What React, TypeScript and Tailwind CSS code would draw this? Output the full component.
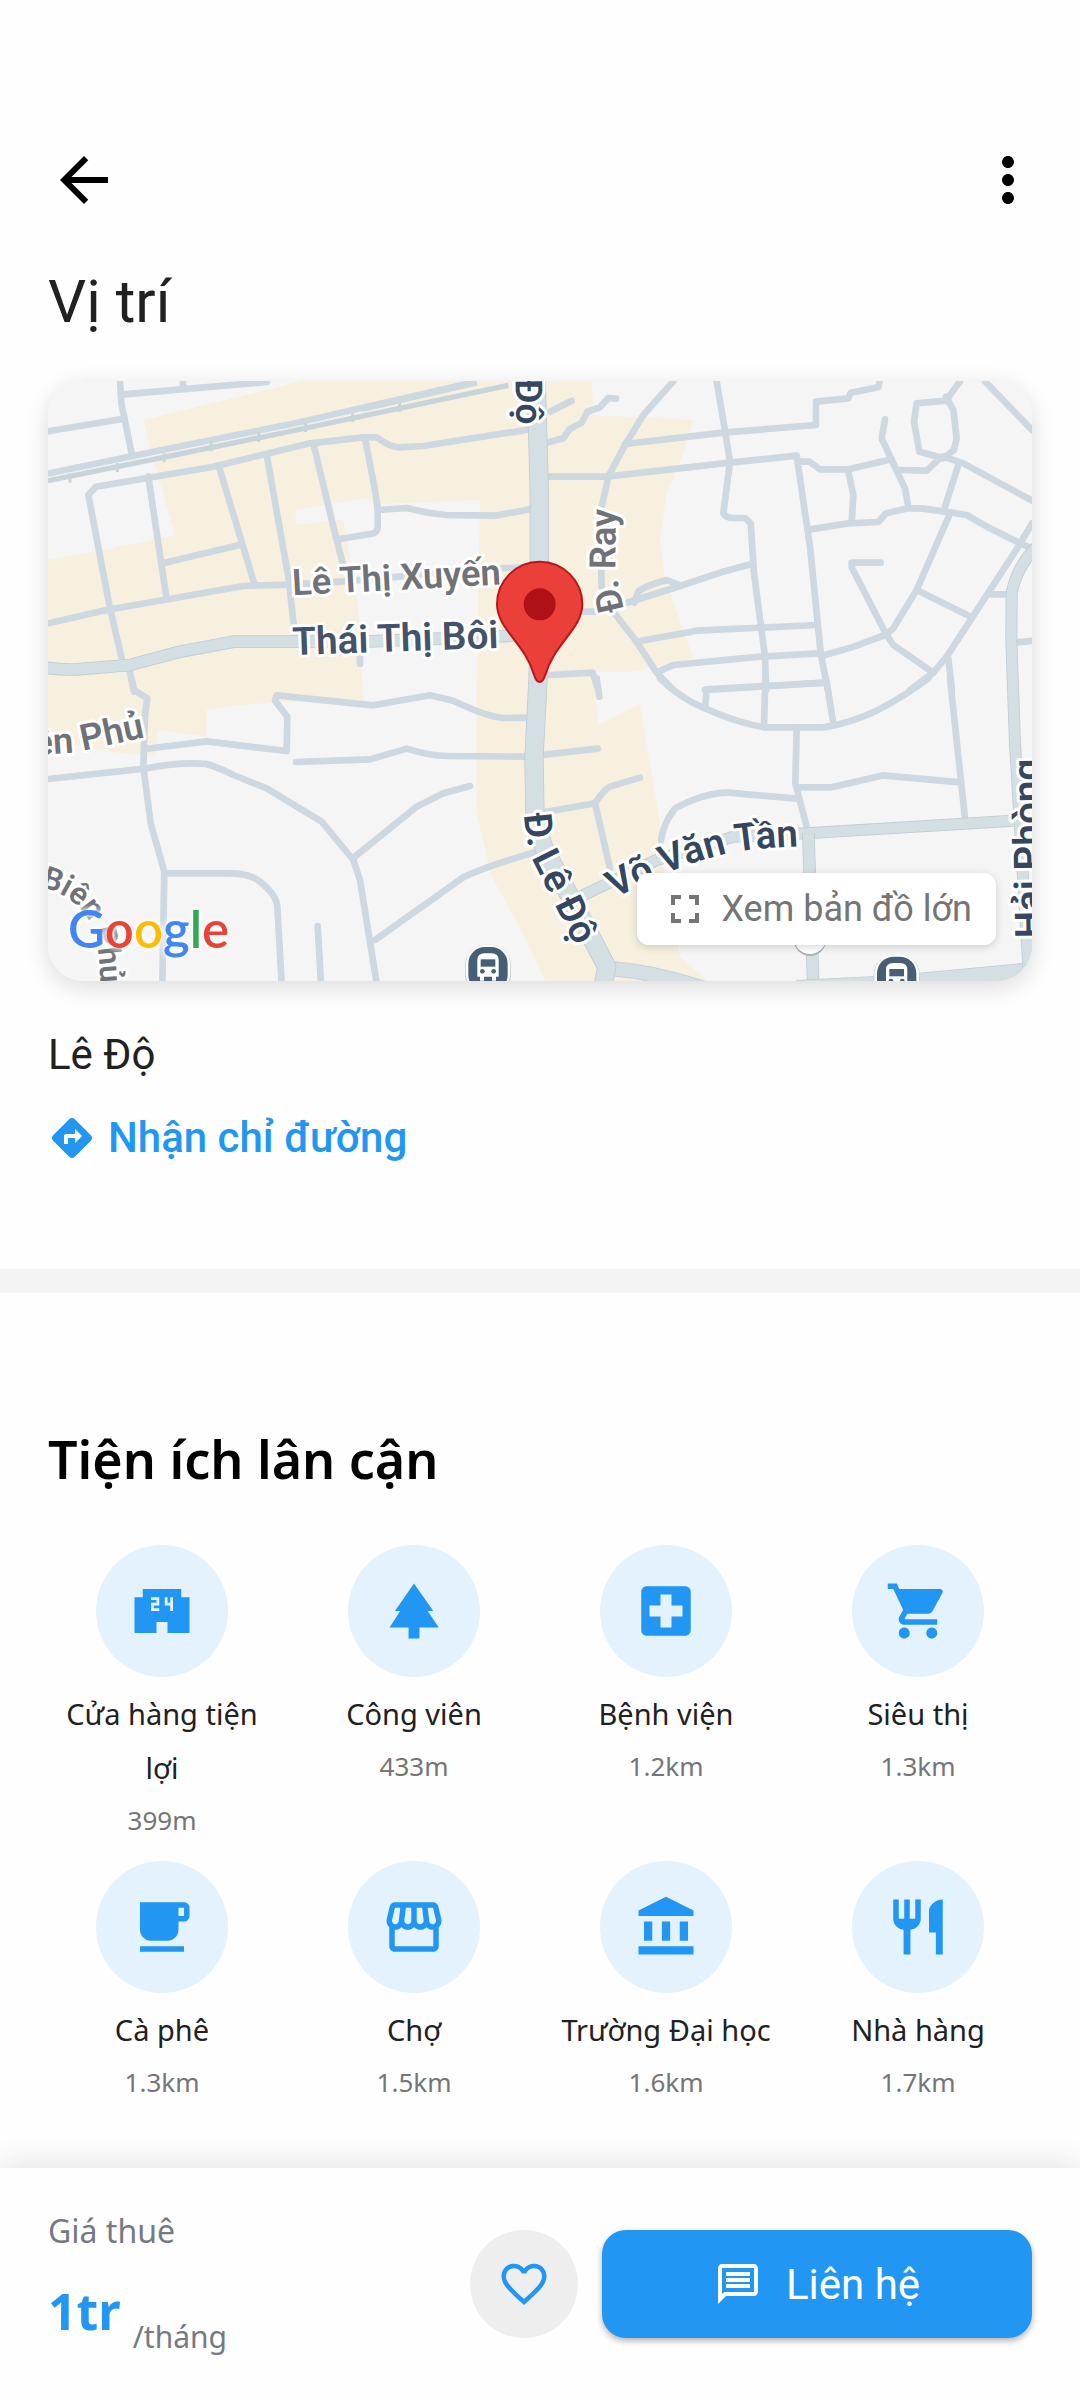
import type { ReactNode } from "react";
import type { IconType } from "react-icons";
import {
  MdAccountBalance,
  MdArrowBack,
  MdDirections,
  MdFavoriteBorder,
  MdFreeBreakfast,
  MdFullscreen,
  MdLocalConvenienceStore,
  MdLocalHospital,
  MdMoreVert,
  MdOutlineMessage,
  MdOutlineStorefront,
  MdPark,
  MdRestaurant,
  MdShoppingCart,
} from "react-icons/md";

type Place = { name: string; distance: string; icon: IconType };

const places: Place[] = [
  { name: "Cửa hàng tiện lợi", distance: "399m", icon: MdLocalConvenienceStore },
  { name: "Công viên", distance: "433m", icon: MdPark },
  { name: "Bệnh viện", distance: "1.2km", icon: MdLocalHospital },
  { name: "Siêu thị", distance: "1.3km", icon: MdShoppingCart },
  { name: "Cà phê", distance: "1.3km", icon: MdFreeBreakfast },
  { name: "Chợ", distance: "1.5km", icon: MdOutlineStorefront },
  { name: "Trường Đại học", distance: "1.6km", icon: MdAccountBalance },
  { name: "Nhà hàng", distance: "1.7km", icon: MdRestaurant },
];

/* Streets are grouped by quadrant; each quadrant has its own origin. */
const northWest = [
  "M270 60L274 130L305 280",
  "M274 104L480 86L710 66",
  "M459 62V84",
  "M54 214L272 178",
  "M355 350L408 705",
  "M567 320L672 668",
  "M405 608L632 554",
  "M710 285L775 650L795 830",
  "M850 250L910 500L938 610",
  "M1005 235L1035 390L1043 445V505Q1040 520 1022 522L925 538",
  "M1046 450L1130 444Q1190 460 1250 465L1395 467L1500 448",
  "M54 790L230 750L640 678L780 674L940 664L1400 625L1500 622",
  "M240 745L175 405L198 380L550 320L840 250L1000 232H1040Q1080 262 1110 262L1180 258L1500 208",
  "M240 745L275 895",
  "M298 930L312 995",
  "M990 890V912",
];

const northEast = [
  "M60 155L125 122",
  "M55 247L100 235L118 208L155 188L172 155L210 142L235 114L258 116",
  "M430 64L340 165L285 255L235 350L215 440L212 560L215 680",
  "M285 252L580 218L858 195V125L955 115L962 98L1045 82L1048 66",
  "M560 64L583 200L600 305L580 460Q588 474 610 474H645L662 490L672 640L705 890L708 990",
  "M55 350H230L600 308L800 287L840 560L872 878L893 990",
  "M810 305H838L870 328H955L1085 298",
  "M1065 178L1055 235L1085 300L1125 385L1135 440",
  "M1110 330L1190 332L1235 290",
  "M955 335L970 405L965 488",
  "M840 508L955 490L1045 486L1068 460L1135 445H1175L1245 455L1310 465L1380 505L1470 550L1506 565",
  "M1290 64L1248 122L1160 130L1152 185L1168 275L1240 295L1272 270L1280 235L1270 150L1248 110",
  "M1240 290L1300 310L1506 422",
  "M1285 315L1245 440",
  "M1365 64L1506 210",
  "M1258 465L1160 690L1090 805L1065 825L965 862L885 885",
  "M1160 690L1325 772",
  "M1506 490L1465 560L1325 775L1250 890L1210 938L1140 990",
  "M1052 608H965V622L1068 822L1090 855L1210 938",
  "M665 612L580 635L450 678L270 735",
  "M312 728L325 695Q340 680 410 660L450 676",
  "M160 755H205",
  "M250 755L318 843L380 938L430 990",
  "M318 845L500 812L860 795",
  "M385 935L430 915L690 890L868 880",
  "M55 945L188 938L205 990",
  "M525 990L885 968",
  "M1385 703H1435",
  "M1460 847L1510 842",
  "M1255 895L1266 990",
];

const southWest = [
  "M305 -5L312 30L352 55L345 105L340 260L362 430L403 575L397 910",
  "M345 207L530 184L770 213L772 110L735 62L740 46L1030 76L1200 46L1270 62Q1380 115 1430 114L1490 113",
  "M54 297L350 265Q450 245 530 252Q580 268 610 285L710 325L875 425L970 540L990 600L1040 910",
  "M975 530L1160 380L1240 340L1320 318",
  "M798 246L1020 238L1130 206Q1200 228 1250 228L1500 230",
  "M1035 780L1300 592Q1360 562 1510 518",
  "M410 580H600Q660 580 690 605Q740 645 742 680L755 910",
  "M863 738L873 910",
];

const southEast = [
  "M390 -5Q450 55 525 85Q610 125 700 142H880Q960 130 1040 92Q1130 45 1195 -5",
  "M525 85L530 28L885 8",
  "M706 -5L702 140",
  "M888 -5L910 130",
  "M200 -5L208 50",
  "M45 224L203 206",
  "M50 395L195 370L240 565",
  "M195 370Q225 325 240 320L330 293",
  "M800 145L796 310L830 440",
  "M805 322H905L1060 286L1290 307",
  "M1260 -5L1305 415",
  "M393 480Q400 430 435 385Q530 335 600 338Q700 348 800 356",
];

function Streets({ paths }: { paths: string[] }) {
  return (
    <g fill="none" stroke="#cdd8e1" strokeWidth="20" strokeLinecap="round" strokeLinejoin="round">
      {paths.map((d) => (
        <path key={d} d={d} />
      ))}
    </g>
  );
}

function Avenue({ d, width }: { d: string; width: number }) {
  return (
    <g fill="none" strokeLinejoin="round">
      <path d={d} stroke="#bfccd5" strokeWidth={width} />
      <path d={d} stroke="#d4dfe4" strokeWidth={width - 5} />
    </g>
  );
}

function CurvedLabel({
  id,
  d,
  size,
  color,
  end,
  children,
}: {
  id: string;
  d: string;
  size: number;
  color: string;
  end?: boolean;
  children: ReactNode;
}) {
  return (
    <>
      <defs>
        <path id={id} d={d} />
      </defs>
      <text fontSize={size} fill={color}>
        <textPath href={`#${id}`} startOffset={end ? "100%" : "0%"} textAnchor={end ? "end" : "start"}>
          {children}
        </textPath>
      </text>
    </>
  );
}

function BusStop({ x, y }: { x: number; y: number }) {
  return (
    <g transform={`translate(${x} ${y})`}>
      <rect x="-69" y="-68" width="138" height="150" rx="62" fill="#b9c4cc" />
      <rect x="-67" y="-68" width="134" height="146" rx="60" fill="#fff" />
      <rect x="-59" y="-61" width="118" height="134" rx="50" fill="#475f75" />
      <path d="M-32 28V-22Q-32 -42 -10 -42H10Q32 -42 32 -22V28H24V40H12V28H-12V40H-24V28Z" fill="#fff" />
      <rect x="-22" y="-24" width="44" height="22" fill="#475f75" />
      <circle cx="-17" cy="12" r="7" fill="#475f75" />
      <circle cx="17" cy="12" r="7" fill="#475f75" />
    </g>
  );
}

function MapDrawing() {
  return (
    <svg
      viewBox="0 0 2952 1800"
      preserveAspectRatio="xMidYMid slice"
      className="block aspect-[41/25] w-full font-[Roboto,sans-serif]"
      role="img"
      aria-label="Bản đồ khu vực Lê Độ"
    >
      <rect width="2952" height="1800" fill="#f5f5f6" />
      <g transform="translate(-54 -63)">
        <path
          fill="#f7f0df"
          d="M340 180L830 60H1685L1690 165L1990 180L1960 280L1910 400L1890 540L1905 650L1935 740L1990 895L1800 935H1690L1705 1095L1830 1032L1885 1360L1900 1520L1950 1790L2040 1870H1550L1470 1705L1385 1550L1340 1360V960L1350 420L1050 432L1000 415L795 450L800 495L940 480L985 740L1000 1020Q700 1020 530 1050V1130L385 1110L375 1190L270 1180L54 1140V600L195 575L435 525L370 300Z"
        />
      </g>

      <g transform="translate(-54 -63)">
        <Streets paths={northWest} />
        <g fill="none">
          <path d="M54 342L400 270L800 190L1340 66" stroke="#cdd8e1" strokeWidth="22" />
          <path d="M54 362L400 292L800 210L1435 76" stroke="#c9d3da" strokeWidth="16" />
          <path d="M54 352L400 281L800 200L1000 154" stroke="#eef1f2" strokeWidth="4" />
          <path
            d="M120 340v28M262 310v26M403 280v26M544 242v32M686 216v30M827 190v26M968 160v26M1109 130v26"
            stroke="#c9d3da"
            strokeWidth="9"
          />
        </g>
      </g>
      <g transform="translate(1446 -63)">
        <Streets paths={northEast} />
      </g>
      <g transform="translate(-54 897)">
        <Streets paths={southWest} />
      </g>
      <g transform="translate(1446 897)">
        <Streets paths={southEast} />
      </g>

      <g transform="translate(-54 -63)">
        <Avenue d="M40 922Q90 930 140 928L300 915L450 875L610 845H1000L1500 825" width={38} />
        <Avenue d="M1640 1615L1880 1500L2110 1430L2330 1420L2950 1382" width={36} />
        <Avenue d="M2335 1420L2350 1880" width={38} />
        <Avenue d="M1725 1825Q1850 1830 2020 1885" width={46} />
        <Avenue d="M1518 40L1528 400V800L1524 960L1512 1190L1515 1380L1540 1460L1620 1610L1730 1820L1720 1880" width={58} />
        <Avenue d="M2300 1885L2600 1870L3020 1830" width={50} />
        <Avenue d="M3020 560Q2960 620 2945 700L2944 840L2955 1150L2995 1820" width={36} />
      </g>

      <g fontWeight="600" stroke="#fff" strokeWidth="18" strokeLinejoin="round" className="[paint-order:stroke]">
        <g transform="translate(-54 -63)">
          <text fontSize="109" fill="#6f7377" transform="translate(788 706) rotate(-3)">
            Lê Thị Xuyến
          </text>
          <text fontSize="116" fill="#42536b" transform="translate(788 885) rotate(-2)">
            Thái Thị Bôi
          </text>
          <text fontSize="112" fill="#35475e" textAnchor="end" transform="translate(1459 194) rotate(89)">
            Độ
          </text>
        </g>
        <g transform="translate(1446 -63)">
          <CurvedLabel id="road-ray" d="M282 750L262 660L256 610L258 380" size={109} color="#6f7377">
            Đ. Ray
          </CurvedLabel>
        </g>
        <g transform="translate(-54 897)">
          <CurvedLabel id="road-phu" d="M-500 260L130 218L346 172" size={109} color="#6f7377" end>
            Điện Biên Phủ
          </CurvedLabel>
          <CurvedLabel id="road-bien" d="M30 620Q135 645 180 728Q215 790 212 1000" size={94} color="#6f7377">
            Biên Phủ
          </CurvedLabel>
        </g>
        <g transform="translate(1446 897)">
          <CurvedLabel id="road-do" d="M-18 402Q-14 500 20 565L70 665L180 890" size={116} color="#35475e">
            Đ. Lê Độ
          </CurvedLabel>
          <CurvedLabel id="road-tan" d="M256 656Q420 560 600 518Q700 500 900 496" size={115} color="#35475e">
            Võ Văn Tần
          </CurvedLabel>
          <text fontSize="116" fill="#35475e" transform="translate(1538 774) rotate(-91)">
            Hải Phòng
          </text>
        </g>
      </g>

      <g transform="translate(-54 897)">
        <BusStop x={1374} y={862} />
      </g>
      <g transform="translate(1446 897)">
        <BusStop x={1100} y={891} />
        <circle cx="840" cy="780" r="48" fill="#aab2b8" />
        <circle cx="840" cy="774" r="48" fill="#fff" />
      </g>
      <g transform="translate(1475 670)">
        <path
          d="M0 233C-8 233 -13 224 -17 211C-45 115 -127 75 -128 0A128 128 0 0 1 128 0C127 75 45 115 17 211C13 224 8 233 0 233Z"
          fill="#ea4039"
          stroke="#b9161a"
          strokeWidth="6"
        />
        <circle r="48" fill="#b01116" />
      </g>
    </svg>
  );
}

function PlaceCard({ name, distance, icon: Icon }: Place) {
  return (
    <li className="flex flex-col items-center text-center">
      <span className="flex size-[132px] items-center justify-center rounded-full bg-[#e3f2fc] text-[#2196f3]">
        <Icon size={66} />
      </span>
      <span className="mt-[10px] max-w-[228px] text-[29px] leading-[54px] text-[#212121]">{name}</span>
      <span className="text-[26px] leading-[50px] text-[#757575]">{distance}</span>
    </li>
  );
}

export default function App() {
  return (
    <div className="flex min-h-screen flex-col bg-[#fefefe] font-['Noto_Sans',sans-serif]">
      <header className="flex items-center justify-between pt-36 pr-9 pl-12">
        <button type="button" aria-label="Quay lại" className="text-black">
          <MdArrowBack size={72} />
        </button>
        <button type="button" aria-label="Tùy chọn khác" className="text-black">
          <MdMoreVert size={72} />
        </button>
      </header>

      <main className="flex-1">
        <section className="px-12 font-[Roboto,sans-serif]">
          <h1 className="mt-[50px] text-[60px] leading-[72px] text-[#212121]">Vị trí</h1>
          <div className="relative mt-[43px] overflow-hidden rounded-[36px] shadow-[0_6px_24px_rgba(0,0,0,0.14)]">
            <MapDrawing />
            <div className="absolute bottom-4 left-5 font-[Lato,sans-serif] text-[51px] leading-[72px] font-semibold [text-shadow:0_0_6px_#fff,0_0_6px_#fff]">
              <span className="text-[#4285f4]">G</span>
              <span className="text-[#ea4335]">o</span>
              <span className="text-[#fbbc05]">o</span>
              <span className="text-[#4285f4]">g</span>
              <span className="text-[#34a853]">l</span>
              <span className="text-[#ea4335]">e</span>
            </div>
            <button
              type="button"
              className="absolute right-9 bottom-9 flex h-18 items-center gap-3 rounded-xl bg-white px-6 text-[36px] text-[#757575] shadow-[0_2px_8px_rgba(0,0,0,0.16)]"
            >
              <MdFullscreen size={48} />
              Xem bản đồ lớn
            </button>
          </div>
          <p className="mt-12 text-[42px] leading-[52px] text-[#212121]">Lê Độ</p>
          <a
            href="#directions"
            className="mt-[30px] flex w-fit items-center gap-3 text-[42px] leading-[54px] font-medium text-[#2196f3]"
          >
            <MdDirections size={48} />
            Nhận chỉ đường
          </a>
        </section>

        <div className="mt-[104px] h-6 bg-[#f4f4f4]" />

        <section className="px-9 pt-[130px] pb-9">
          <h2 className="px-3 text-[52px] leading-[72px] font-semibold text-black">Tiện ích lân cận</h2>
          <ul className="mt-[50px] grid grid-cols-4 gap-y-4">
            {places.map((place) => (
              <PlaceCard key={place.name} {...place} />
            ))}
          </ul>
        </section>
      </main>

      <footer className="sticky bottom-0 flex items-center gap-6 bg-[#fefefe] px-12 py-9 shadow-[0_-2px_30px_rgba(0,0,0,0.12)]">
        <div className="flex-1">
          <p className="text-[32px] leading-[54px] text-[#757a82]">Giá thuê</p>
          <p className="flex items-end gap-3 text-[30px] leading-[54px] text-[#757a82]">
            <span className="text-[50px] leading-[106px] font-bold text-[#2196f3]">1tr</span>
            /tháng
          </p>
        </div>
        <button
          type="button"
          aria-label="Yêu thích"
          className="flex size-[108px] items-center justify-center rounded-full bg-[#eeeeee] text-[#2196f3]"
        >
          <MdFavoriteBorder size={54} />
        </button>
        <button
          type="button"
          className="flex h-[108px] w-[430px] items-center justify-center gap-6 rounded-3xl bg-[#2196f3] font-[Roboto,sans-serif] text-[42px] text-white shadow-[0_3px_6px_rgba(0,0,0,0.3)]"
        >
          <MdOutlineMessage size={48} />
          Liên hệ
        </button>
      </footer>
    </div>
  );
}
